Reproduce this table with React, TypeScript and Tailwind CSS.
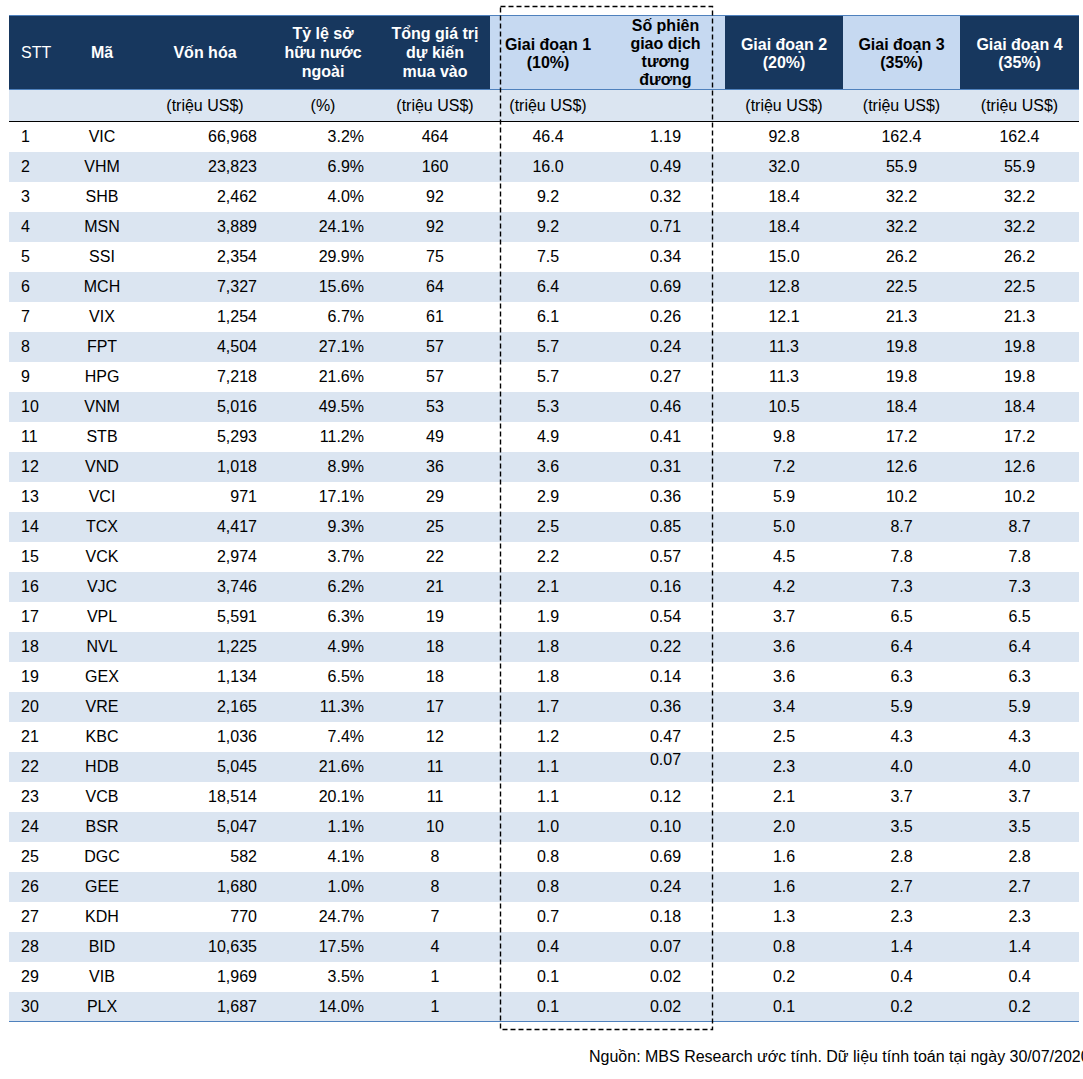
import React from "react";

type Row = [string, string, string, string, string, string, string, string, string, string];

const rows: Row[] = [
  ["1", "VIC", "66,968", "3.2%", "464", "46.4", "1.19", "92.8", "162.4", "162.4"],
  ["2", "VHM", "23,823", "6.9%", "160", "16.0", "0.49", "32.0", "55.9", "55.9"],
  ["3", "SHB", "2,462", "4.0%", "92", "9.2", "0.32", "18.4", "32.2", "32.2"],
  ["4", "MSN", "3,889", "24.1%", "92", "9.2", "0.71", "18.4", "32.2", "32.2"],
  ["5", "SSI", "2,354", "29.9%", "75", "7.5", "0.34", "15.0", "26.2", "26.2"],
  ["6", "MCH", "7,327", "15.6%", "64", "6.4", "0.69", "12.8", "22.5", "22.5"],
  ["7", "VIX", "1,254", "6.7%", "61", "6.1", "0.26", "12.1", "21.3", "21.3"],
  ["8", "FPT", "4,504", "27.1%", "57", "5.7", "0.24", "11.3", "19.8", "19.8"],
  ["9", "HPG", "7,218", "21.6%", "57", "5.7", "0.27", "11.3", "19.8", "19.8"],
  ["10", "VNM", "5,016", "49.5%", "53", "5.3", "0.46", "10.5", "18.4", "18.4"],
  ["11", "STB", "5,293", "11.2%", "49", "4.9", "0.41", "9.8", "17.2", "17.2"],
  ["12", "VND", "1,018", "8.9%", "36", "3.6", "0.31", "7.2", "12.6", "12.6"],
  ["13", "VCI", "971", "17.1%", "29", "2.9", "0.36", "5.9", "10.2", "10.2"],
  ["14", "TCX", "4,417", "9.3%", "25", "2.5", "0.85", "5.0", "8.7", "8.7"],
  ["15", "VCK", "2,974", "3.7%", "22", "2.2", "0.57", "4.5", "7.8", "7.8"],
  ["16", "VJC", "3,746", "6.2%", "21", "2.1", "0.16", "4.2", "7.3", "7.3"],
  ["17", "VPL", "5,591", "6.3%", "19", "1.9", "0.54", "3.7", "6.5", "6.5"],
  ["18", "NVL", "1,225", "4.9%", "18", "1.8", "0.22", "3.6", "6.4", "6.4"],
  ["19", "GEX", "1,134", "6.5%", "18", "1.8", "0.14", "3.6", "6.3", "6.3"],
  ["20", "VRE", "2,165", "11.3%", "17", "1.7", "0.36", "3.4", "5.9", "5.9"],
  ["21", "KBC", "1,036", "7.4%", "12", "1.2", "0.47", "2.5", "4.3", "4.3"],
  ["22", "HDB", "5,045", "21.6%", "11", "1.1", "0.07", "2.3", "4.0", "4.0"],
  ["23", "VCB", "18,514", "20.1%", "11", "1.1", "0.12", "2.1", "3.7", "3.7"],
  ["24", "BSR", "5,047", "1.1%", "10", "1.0", "0.10", "2.0", "3.5", "3.5"],
  ["25", "DGC", "582", "4.1%", "8", "0.8", "0.69", "1.6", "2.8", "2.8"],
  ["26", "GEE", "1,680", "1.0%", "8", "0.8", "0.24", "1.6", "2.7", "2.7"],
  ["27", "KDH", "770", "24.7%", "7", "0.7", "0.18", "1.3", "2.3", "2.3"],
  ["28", "BID", "10,635", "17.5%", "4", "0.4", "0.07", "0.8", "1.4", "1.4"],
  ["29", "VIB", "1,969", "3.5%", "1", "0.1", "0.02", "0.2", "0.4", "0.4"],
  ["30", "PLX", "1,687", "14.0%", "1", "0.1", "0.02", "0.1", "0.2", "0.2"],
];

const GRID = "grid grid-cols-[51px_84px_122px_114px_110px_116px_119px_118px_117px_119px]";

const cellAlign = [
  "justify-start pl-[12px]",
  "justify-center",
  "justify-end pr-[9px]",
  "justify-end pr-[16px]",
  "justify-center",
  "justify-center",
  "justify-center",
  "justify-center",
  "justify-center",
  "justify-center",
];

const DARK = "bg-[#17375e] text-white";
const LIGHT = "bg-[#c6d9f1] text-black";

export default function App() {
  return (
    <div className="relative w-[1083px] h-[1079px] overflow-hidden bg-white text-black font-['Liberation_Sans',Arial,sans-serif] text-[16px]">
      <div className="pt-[15px] pl-[9px]">
        <div className="w-[1070px]">
          {/* Header */}
          <div className={`${GRID} h-[75px] border-t border-b border-[#4f81bd] font-bold leading-[19px] text-center`}>
            <div className={`${DARK} flex items-center pl-[12px] font-normal`}>STT</div>
            <div className={`${DARK} flex items-center justify-center`}>Mã</div>
            <div className={`${DARK} flex items-center justify-center`}>Vốn hóa</div>
            <div className={`${DARK} flex items-center justify-center`}>
              <span>Tỷ lệ sở<br />hữu nước<br />ngoài</span>
            </div>
            <div className={`${DARK} flex items-center justify-center`}>
              <span>Tổng giá trị<br />dự kiến<br />mua vào</span>
            </div>
            <div className={`${LIGHT} flex items-center justify-center pt-[2px] leading-[18px]`}>
              <span>Giai đoạn 1<br />(10%)</span>
            </div>
            <div className={`${LIGHT} flex items-center justify-center leading-[18px]`}>
              <span>Số phiên<br />giao dịch<br />tương<br />đương</span>
            </div>
            <div className={`${DARK} flex items-center justify-center pt-[2px] leading-[18px]`}>
              <span>Giai đoạn 2<br />(20%)</span>
            </div>
            <div className={`${LIGHT} flex items-center justify-center pt-[2px] leading-[18px]`}>
              <span>Giai đoạn 3<br />(35%)</span>
            </div>
            <div className={`${DARK} flex items-center justify-center pt-[2px] leading-[18px]`}>
              <span>Giai đoạn 4<br />(35%)</span>
            </div>
          </div>

          {/* Units row */}
          <div className={`${GRID} h-[32px] bg-[#dbe5f1] border-b border-black`}>
            <div />
            <div />
            <div className="flex items-center justify-center">(triệu US$)</div>
            <div className="flex items-center justify-center">(%)</div>
            <div className="flex items-center justify-center">(triệu US$)</div>
            <div className="flex items-center justify-center">(triệu US$)</div>
            <div />
            <div className="flex items-center justify-center">(triệu US$)</div>
            <div className="flex items-center justify-center">(triệu US$)</div>
            <div className="flex items-center justify-center">(triệu US$)</div>
          </div>

          {/* Body */}
          {rows.map((r, i) => (
            <div
              key={r[0]}
              className={`${GRID} h-[30px] ${i % 2 === 1 ? "bg-[#dbe5f1]" : "bg-white"} ${
                i === rows.length - 1 ? "border-b border-[#4f81bd]" : ""
              }`}
            >
              {r.map((v, j) => (
                <div key={j} className={`flex items-center ${cellAlign[j]}`}>
                  <span className={i === 21 && j === 6 ? "-translate-y-[7px]" : ""}>{v}</span>
                </div>
              ))}
            </div>
          ))}
        </div>
      </div>

      {/* Source note */}
      <div className="mt-[26px] pl-[589px] whitespace-nowrap text-[16px] leading-[18px]">
        Nguồn: MBS Research ước tính. Dữ liệu tính toán tại ngày 30/07/2020
      </div>

      {/* Dashed highlight box */}
      <svg
        className="absolute left-[499px] top-[5px] pointer-events-none"
        width="215"
        height="1026"
        viewBox="0 0 215 1026"
      >
        <rect
          x="1.5"
          y="1.5"
          width="212"
          height="1023"
          fill="none"
          stroke="#000"
          strokeWidth="1.4"
          strokeDasharray="5 3"
        />
      </svg>
    </div>
  );
}
